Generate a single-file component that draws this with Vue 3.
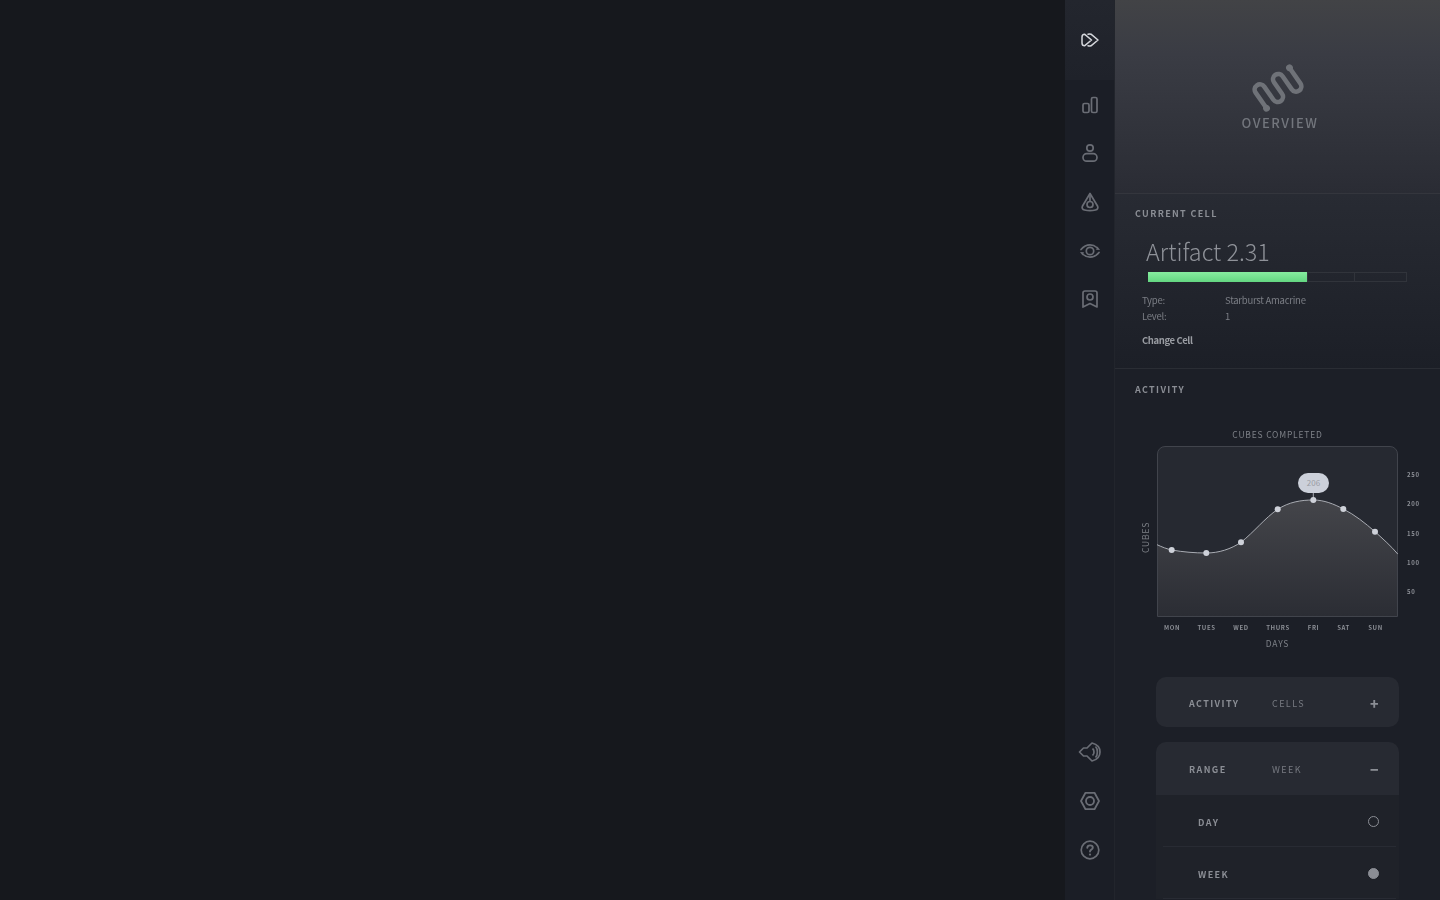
<script setup>
const days = ['MON', 'TUES', 'WED', 'THURS', 'FRI', 'SAT', 'SUN']
const ticks = [250, 200, 150, 100, 50]
const points = [
  [14.7, 104], [49.3, 107], [84, 96.3], [120.7, 63.3], [156.3, 54], [186.3, 63], [218, 85.7],
]
const curve = 'M0 98.7 C5 101 10 103 14.7 104 C26 106 38 107 49.3 107 C62 107 74 103 84 96.3 C97 86 108 72 120.7 63.3 C132 56 144 54 156.3 54 C167 54 177 58 186.3 63 C198 69 208 77 218 85.7 C226 93 234 100 241 108.3'
</script>

<template>
  <div class="page">
    <nav class="rail">
      <div class="rail-top">
        <svg width="24" height="24" viewBox="0 0 24 24" fill="none" stroke="#d5d7dc" stroke-width="1.5" stroke-linejoin="round" stroke-linecap="round">
          <path d="M6.5 6.2 L13.5 12 L6.5 17.8 C5 17.8 4 16.7 4 15 V9 C4 7.3 5 6.2 6.5 6.2 Z" />
          <path d="M10 6.2 C11 5.8 12 5.8 13 6.2 L20 12 L13 17.8 C12 18.2 11 18.2 10 17.8" />
        </svg>
      </div>
      <div class="rail-item">
        <svg width="24" height="24" viewBox="0 0 24 24" fill="none" stroke="#6a6d75" stroke-width="1.7">
          <rect x="5" y="11.5" width="6" height="9" rx="1.5" />
          <rect x="13.5" y="5.5" width="5.5" height="15" rx="1.5" />
        </svg>
      </div>
      <div class="rail-item">
        <svg width="24" height="24" viewBox="0 0 24 24" fill="none" stroke="#6a6d75" stroke-width="1.7">
          <circle cx="12" cy="7" r="3.2" />
          <rect x="5" y="12.7" width="14" height="7.5" rx="3.7" />
        </svg>
      </div>
      <div class="rail-item">
        <svg width="24" height="24" viewBox="0 0 24 24" fill="none" stroke="#6a6d75" stroke-width="1.7" stroke-linejoin="round">
          <path d="M12 3.5 L19.5 16 C20.5 18 19.5 19.5 17.5 20 C14 20.8 10 20.8 6.5 20 C4.5 19.5 3.5 18 4.5 16 Z" />
          <path d="M12 3.5 V11.5" />
          <circle cx="12" cy="14.5" r="3" />
        </svg>
      </div>
      <div class="rail-item">
        <svg width="24" height="24" viewBox="0 0 24 24" fill="none" stroke="#6a6d75" stroke-width="1.7" stroke-linecap="round">
          <circle cx="12" cy="12" r="3.7" />
          <path d="M3 10.5 C5.5 7.5 8 5.8 12 5.8 C15 5.8 17 6.8 18.8 8.5" />
          <path d="M21 13.5 C18.5 16.5 16 18.2 12 18.2 C9 18.2 7 17.2 5.2 15.5" />
          <path d="M2 13 L6 13.2 L4.5 16.5 Z" fill="#6a6d75" stroke="none" />
          <path d="M22 11 L18 10.8 L19.5 7.5 Z" fill="#6a6d75" stroke="none" />
        </svg>
      </div>
      <div class="rail-item">
        <svg width="24" height="24" viewBox="0 0 24 24" fill="none" stroke="#6a6d75" stroke-width="1.7" stroke-linejoin="round">
          <path d="M7 4 H17 A2 2 0 0 1 19 6 V20 L12 16.5 L5 20 V6 A2 2 0 0 1 7 4 Z" />
          <circle cx="12" cy="10" r="3" />
        </svg>
      </div>
      <div class="rail-bottom">
        <div class="rail-item">
          <svg width="24" height="24" viewBox="0 0 24 24" fill="none" stroke="#6a6d75" stroke-width="1.7" stroke-linejoin="round">
            <path d="M14 3 L9 8 H5.5 L1.5 12 L5.5 16 H9 L14 21 C18 20 22 17 22 12 C22 7 18 4 14 3 Z" />
            <path d="M14.5 8.5 C16.5 10 16.5 14 14.5 15.5" />
            <path d="M17.5 6.5 C20 9 20 15 17.5 17.5" />
          </svg>
        </div>
        <div class="rail-item">
          <svg width="24" height="24" viewBox="0 0 24 24" fill="none" stroke="#6a6d75" stroke-width="1.8" stroke-linejoin="round">
            <path d="M7.5 3.8 H16.5 L21 12 L16.5 20.2 H7.5 L3 12 Z" />
            <circle cx="12" cy="12" r="4" />
          </svg>
        </div>
        <div class="rail-item">
          <svg width="24" height="24" viewBox="0 0 24 24" fill="none" stroke="#6a6d75" stroke-width="1.7" stroke-linecap="round">
            <circle cx="12" cy="12" r="8.8" />
            <path d="M9.3 9.8 C9.4 8.2 10.6 7.4 12 7.4 C13.6 7.4 14.8 8.3 14.8 9.7 C14.8 11.5 12 11.6 12 13.6" stroke-width="1.9" />
            <circle cx="12" cy="16.6" r="1.1" fill="#6a6d75" stroke="none" />
          </svg>
        </div>
      </div>
    </nav>

    <aside class="panel">
      <header class="hero">
        <svg class="logo" width="60" height="60" viewBox="-30 -30 60 60" fill="none" stroke="#6f7278" stroke-width="4.6">
          <g transform="rotate(-35)">
            <path d="M-21 10 V-9 A5.25 5.25 0 0 1 -10.5 -9 V7 A5.25 5.25 0 0 0 0 7 V-7 A5.25 5.25 0 0 1 10.5 -7 V9 A5.25 5.25 0 0 0 21 9 V-10" />
            <circle cx="-21" cy="10" r="3.4" fill="#6f7278" stroke="none" />
            <circle cx="21" cy="-10" r="3.4" fill="#6f7278" stroke="none" />
          </g>
        </svg>
        <h1 class="hero-title txt">OVERVIEW</h1>
      </header>

      <section class="cell">
        <h2 class="section-label txt">CURRENT CELL</h2>
        <div class="cell-name txt">Artifact 2.31</div>
        <div class="progress">
          <div class="progress-fill"></div>
          <div class="progress-rest"></div>
          <div class="progress-rest last"></div>
        </div>
        <dl class="facts txt">
          <dt>Type:</dt>
          <dd>Starburst Amacrine</dd>
          <dt>Level:</dt>
          <dd>1</dd>
        </dl>
        <a class="change txt">Change Cell</a>
      </section>

      <section class="activity">
        <h2 class="section-label">ACTIVITY</h2>
        <div class="chart-title">CUBES COMPLETED</div>
        <div class="chart-row">
          <div class="y-label">CUBES</div>
          <div class="plot">
            <svg width="241" height="171" viewBox="0 0 241 171" fill="none">
              <defs>
                <linearGradient id="area" x1="0" y1="0" x2="0" y2="1">
                  <stop offset="0" stop-color="#44454a" />
                  <stop offset="1" stop-color="#2b2d34" />
                </linearGradient>
              </defs>
              <path d="M8 .5 H233 A7.5 7.5 0 0 1 240.5 8 V170.5 H.5 V8 A7.5 7.5 0 0 1 8 .5 Z" fill="#262931" />
              <path :d="curve + ' V170 H0 Z'" fill="url(#area)" />
              <path d="M8 .5 H233 A7.5 7.5 0 0 1 240.5 8 V170.5 H.5 V8 A7.5 7.5 0 0 1 8 .5 Z" stroke="#41444c" />
              <path :d="curve" stroke="#a9acb3" stroke-width="1" />
              <path d="M156.3 46 V54" stroke="#a9acb3" />
              <circle v-for="p in points" :key="p[0]" :cx="p[0]" :cy="p[1]" r="3" fill="#ced1d9" />
            </svg>
            <div class="bubble">206</div>
          </div>
          <div class="ticks">
            <span v-for="t in ticks" :key="t">{{ t }}</span>
          </div>
        </div>
        <div class="x-labels">
          <span v-for="d in days" :key="d">{{ d }}</span>
        </div>
        <div class="x-title">DAYS</div>

        <div class="option">
          <span class="option-key">ACTIVITY</span>
          <span class="option-val">CELLS</span>
          <span class="option-sign">+</span>
        </div>

        <div class="option open">
          <span class="option-key">RANGE</span>
          <span class="option-val">WEEK</span>
          <span class="option-sign">&minus;</span>
        </div>
        <div class="choices">
          <div class="choice">
            <span>DAY</span>
            <i class="radio"></i>
          </div>
          <div class="choice">
            <span>WEEK</span>
            <i class="radio on"></i>
          </div>
        </div>
      </section>
    </aside>
  </div>
</template>

<style scoped>
.page {
  display: flex;
  justify-content: flex-end;
  height: 900px;
  overflow: hidden;
  background: #16181d;
  font-family: "Noto Sans CJK SC", "Noto Sans", sans-serif;
  color: #8b8e95;
}

.txt,
.activity {
  will-change: opacity;
}

.rail {
  width: 50px;
  flex: none;
  box-sizing: border-box;
  display: flex;
  flex-direction: column;
  border-right: 1px solid #22252c;
  background: #1b1e26;
}

.rail-top {
  height: 80px;
  flex: none;
  display: flex;
  align-items: center;
  justify-content: center;
  background: linear-gradient(#23262e, #1f222a);
}

.rail-item {
  height: 48.75px;
  flex: none;
  display: flex;
  align-items: center;
  justify-content: center;
}

.rail-bottom {
  margin-top: auto;
  padding-bottom: 26px;
}

.panel {
  width: 325px;
  flex: none;
  height: 900px;
  overflow: hidden;
  background: #1c1f27;
}

.hero {
  height: 194px;
  box-sizing: border-box;
  border-bottom: 1px solid #34363d;
  background: linear-gradient(#424346, #3a3c44 28%, #2a2c34);
  display: flex;
  flex-direction: column;
  align-items: center;
  padding-top: 58px;
}

.logo {
  margin-bottom: -3px;
}

.hero-title {
  margin: 0 0 0 5px;
  font-size: 13px;
  font-weight: 500;
  line-height: 16px;
  letter-spacing: 1.5px;
  color: #73767d;
}

.cell {
  height: 175px;
  box-sizing: border-box;
  border-bottom: 1px solid #2a2d34;
  background: linear-gradient(#282b33, #1c1f27);
  padding-top: 13px;
}

.section-label {
  margin: 0 0 0 20px;
  font-size: 9px;
  font-weight: 700;
  line-height: 14px;
  letter-spacing: 1.35px;
  color: #8b8e95;
}

.cell-name {
  margin: 13px 0 0 31px;
  font-size: 23.4px;
  font-weight: 300;
  line-height: 34px;
  color: #8f9299;
}

.progress {
  display: flex;
  margin: 4px 0 0 33px;
  width: 259px;
  height: 10px;
}

.progress-fill {
  width: 159px;
  background: linear-gradient(#86ec9f, #63d681);
}

.progress-rest {
  width: 47px;
  border: 1px solid #31343b;
  border-right: 0;
  box-sizing: border-box;
}

.progress-rest.last {
  width: 53px;
  border-right: 1px solid #31343b;
}

.facts {
  display: grid;
  grid-template-columns: 83px 1fr;
  grid-auto-rows: 16px;
  margin: 9.5px 0 0 27px;
  font-size: 9.5px;
  line-height: 16px;
  letter-spacing: -0.25px;
  color: #7b7e85;
}

.facts dd {
  margin: 0;
}

.change {
  display: block;
  margin: 8.5px 0 0 27px;
  font-size: 9.5px;
  font-weight: 700;
  line-height: 16px;
  letter-spacing: -0.4px;
  color: #9a9da3;
}

.activity {
  padding-top: 14px;
}

.chart-title {
  margin-top: 31px;
  text-align: center;
  font-size: 8.5px;
  line-height: 12px;
  letter-spacing: 0.8px;
  color: #7d8087;
}

.chart-row {
  display: flex;
  margin-top: 6px;
}

.y-label {
  width: 42px;
  flex: none;
  box-sizing: border-box;
  padding: 0 24px 11px 0;
  writing-mode: vertical-rl;
  transform: rotate(180deg);
  text-align: center;
  font-size: 8.5px;
  line-height: 12px;
  letter-spacing: 0.8px;
  color: #7d8087;
}

.plot {
  position: relative;
  width: 241px;
  height: 171px;
  flex: none;
}

.plot svg {
  display: block;
}

.bubble {
  position: absolute;
  left: 141px;
  top: 27px;
  width: 31px;
  height: 20px;
  border-radius: 10px;
  background: #ccd0da;
  text-align: center;
  font-size: 8px;
  line-height: 20px;
  color: #9a9da5;
}

.ticks {
  display: flex;
  flex-direction: column;
  gap: 21.3px;
  padding: 25px 0 0 9px;
  font-size: 6px;
  font-weight: 700;
  line-height: 8px;
  letter-spacing: 0.7px;
  color: #8b8e95;
}

.x-labels {
  display: grid;
  grid-template-columns: 30px 39px 30px 44px 27px 33px 31px;
  margin: 7px 0 0 42px;
  text-align: center;
  font-size: 6px;
  font-weight: 700;
  line-height: 8px;
  letter-spacing: 0.6px;
  color: #8b8e95;
}

.x-title {
  margin-top: 4.5px;
  text-align: center;
  font-size: 8.5px;
  line-height: 12px;
  letter-spacing: 0.8px;
  color: #7d8087;
}

.option {
  display: flex;
  align-items: center;
  width: 243px;
  height: 50px;
  margin: 28.5px 0 0 41px;
  padding: 3px 20.5px 0 33px;
  box-sizing: border-box;
  border-radius: 10px;
  background: #272a32;
  font-size: 9px;
  line-height: 14px;
  letter-spacing: 1.4px;
}

.option.open {
  height: 53px;
  margin-top: 15px;
  padding-top: 2px;
  border-radius: 10px 10px 0 0;
}

.option-key {
  width: 83px;
  font-weight: 700;
  color: #8b8e95;
}

.option-val {
  color: #777a81;
}

.option-sign {
  margin: -2px 0 0 auto;
  font-size: 14px;
  font-weight: 900;
  letter-spacing: 0;
  color: #8b8e95;
}

.choices {
  width: 243px;
  margin-left: 41px;
  padding: 0 3px 0 7px;
  box-sizing: border-box;
  background: #1f2229;
}

.choice {
  display: flex;
  align-items: center;
  justify-content: space-between;
  height: 52px;
  padding: 5px 16.75px 0 35px;
  box-sizing: border-box;
  border-bottom: 1px solid #282b33;
  font-size: 9px;
  font-weight: 700;
  line-height: 14px;
  letter-spacing: 1.4px;
  color: #8b8e95;
}

.radio {
  width: 9px;
  height: 9px;
  margin-top: -4px;
  border: 1px solid #8b8e95;
  border-radius: 50%;
}

.radio.on {
  background: #8b8e95;
}
</style>
